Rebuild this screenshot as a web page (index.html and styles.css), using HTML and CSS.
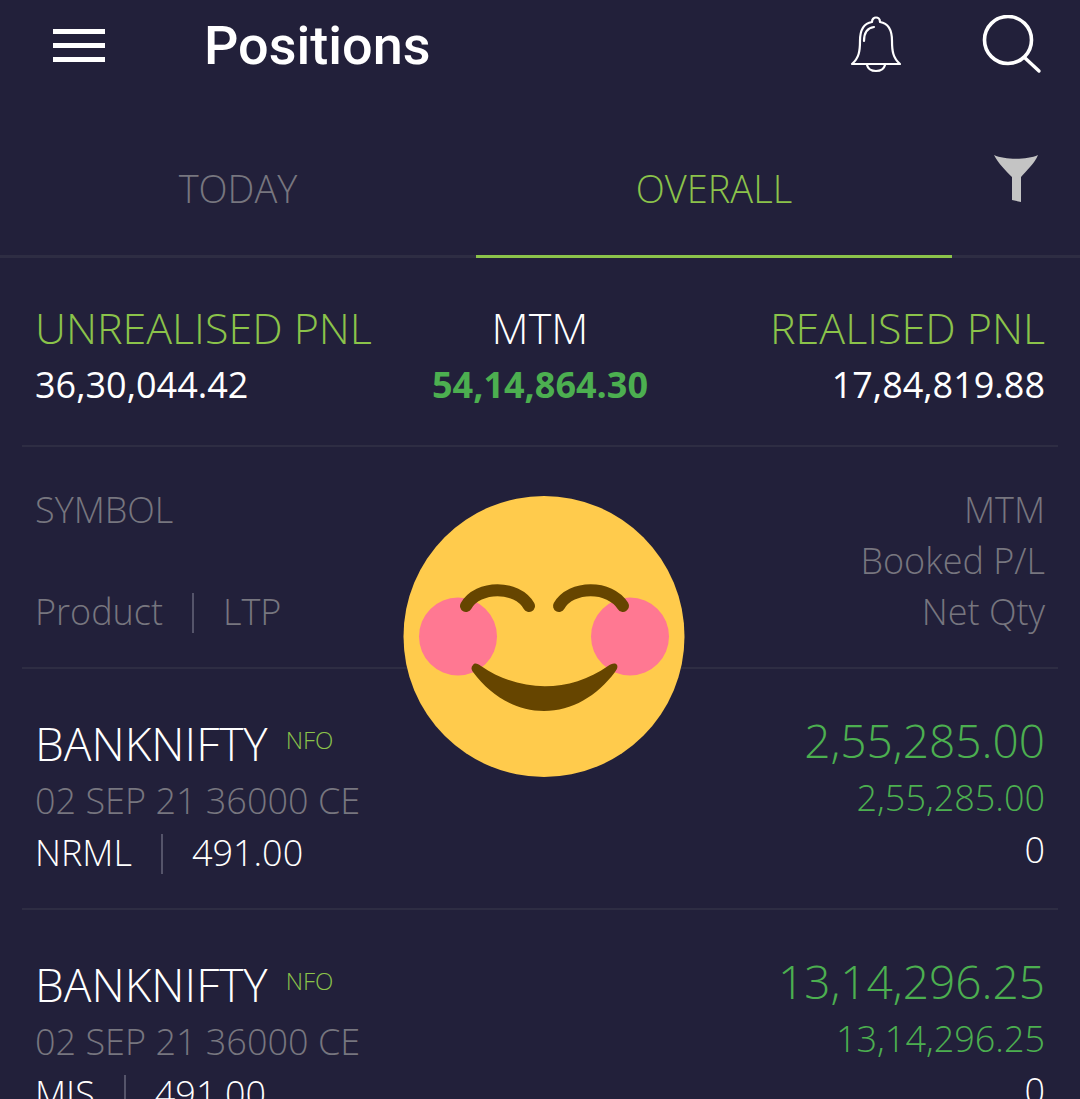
FILE: index.html
```html
<!DOCTYPE html>
<html lang="en">
<head>
  <meta charset="UTF-8" />
  <meta name="viewport" content="width=device-width, initial-scale=1.0" />
  <title>Positions</title>
  <link rel="stylesheet" href="styles.css">
</head>
<body>
  <header class="topbar">
    <div class="menu-icon"><span></span><span></span><span></span></div>
    <h1>Positions</h1>
    <svg class="bell" viewBox="0 0 52 60" fill="none" stroke="#fff" stroke-width="2.2" stroke-linejoin="round" stroke-linecap="round">
      <path d="M2 49 C9 43 10 36 10 26 C10 14 15 8 22 7 C22 1 30 1 30 7 C37 8 42 14 42 26 C42 36 43 43 50 49 Z" />
      <path d="M14 26 C14 18 17 13 24 12" />
      <path d="M17 50 C19 58 33 58 35 50" />
    </svg>
    <svg class="search" viewBox="0 0 60 60" fill="none" stroke="#fff" stroke-linecap="round">
      <circle cx="26" cy="25" r="23.5" stroke-width="3.6" />
      <path d="M43 43 L57 56" stroke-width="3.4" />
    </svg>
  </header>

  <nav class="tabs">
    <div class="tab">TODAY</div>
    <div class="tab tab-active">OVERALL</div>
    <svg class="filter" viewBox="0 0 46 48">
      <path d="M1 1 C12 6 34 6 45 1 C42 9 33 17 28 23 V48 L19 46 V23 C13 17 5 9 1 1 Z" fill="#c4c4c4" />
    </svg>
  </nav>

  <section class="summary">
    <div class="sum-col">
      <div class="sum-label green">UNREALISED PNL</div>
      <div class="sum-value">36,30,044.42</div>
    </div>
    <div class="sum-col sum-mid">
      <div class="sum-label">MTM</div>
      <div class="sum-value sum-total">54,14,864.30</div>
    </div>
    <div class="sum-col sum-right">
      <div class="sum-label green">REALISED PNL</div>
      <div class="sum-value">17,84,819.88</div>
    </div>
  </section>

  <section class="table-head">
    <div>
      <div class="head-line">SYMBOL</div>
      <div class="head-line">&nbsp;</div>
      <div class="head-line">Product<i class="sep"></i>LTP</div>
    </div>
    <div class="align-right">
      <div class="head-line">MTM</div>
      <div class="head-line">Booked P/L</div>
      <div class="head-line">Net Qty</div>
    </div>
  </section>

  <article class="pos-row">
    <div>
      <div class="pos-name">BANKNIFTY<span class="badge">NFO</span></div>
      <div class="pos-contract">02 SEP 21 36000 CE</div>
      <div class="pos-meta">NRML<i class="sep"></i>491.00</div>
    </div>
    <div class="align-right">
      <div class="pos-mtm">2,55,285.00</div>
      <div class="pos-booked">2,55,285.00</div>
      <div class="pos-meta">0</div>
    </div>
  </article>

  <article class="pos-row">
    <div>
      <div class="pos-name">BANKNIFTY<span class="badge">NFO</span></div>
      <div class="pos-contract">02 SEP 21 36000 CE</div>
      <div class="pos-meta">MIS<i class="sep"></i>491.00</div>
    </div>
    <div class="align-right">
      <div class="pos-mtm">13,14,296.25</div>
      <div class="pos-booked">13,14,296.25</div>
      <div class="pos-meta">0</div>
    </div>
  </article>

  <svg class="emoji" viewBox="403 496 282 282">
    <circle cx="544" cy="636.5" r="140.5" fill="#ffcb4c" />
    <circle cx="458" cy="636.5" r="39" fill="#ff7892" />
    <circle cx="630" cy="636.5" r="39" fill="#ff7892" />
    <path d="M466 606 C478 585 517 585 529 606" fill="none" stroke="#664500" stroke-width="12" stroke-linecap="round" />
    <path d="M559 606 C571 585 610 585 623 606" fill="none" stroke="#664500" stroke-width="12" stroke-linecap="round" />
    <path d="M473 665 C475 662 478 664 481 666 C520 693 570 693 608 666 C611 664 615 662 617 665 C618 667 617 669 615 672 C597 696 572 711 544 711 C516 711 491 696 473 672 C471 669 471 667 473 665 Z" fill="#664500" />
  </svg>
</body>
</html>
```

FILE: styles.css
```css
html, body { margin: 0; height: 1099px; overflow: hidden; }
body { position: relative; background: #22203a; color: #fff; font-family: "Open Sans", sans-serif; font-weight: 300; }

.topbar { display: flex; align-items: center; height: 90px; padding-left: 53px; }
.menu-icon { display: flex; flex-direction: column; gap: 9px; width: 52px; }
.menu-icon span { height: 5px; background: #fff; }
.topbar h1 { margin: 0 0 0 99px; font: 500 54px Roboto, sans-serif; flex: 1; }
.bell { width: 52px; height: 60px; margin-right: 80px; }
.search { width: 60px; height: 60px; margin-right: 38px; }

.tabs { position: relative; display: flex; height: 165px; padding-left: 0; border-bottom: 3px solid #2e2d43; }
.tab { width: 476px; height: 168px; box-sizing: border-box; padding-top: 72px; text-align: center; font-size: 38px; color: #77767f; }
.tab-active { color: #8bc34a; border-bottom: 3px solid #8bc34a; }
.filter { position: absolute; left: 993px; top: 64px; width: 46px; height: 48px; }

.summary { display: grid; grid-template-columns: 1fr auto 1fr; margin: 0 22px; padding: 42px 13px 30px; height: 115px; border-bottom: 2px solid #2e2d43; }
.sum-label { font-size: 43px; line-height: 56px; }
.sum-value { font-size: 36px; line-height: 58px; font-weight: 400; }
.sum-mid { text-align: center; }
.sum-right { text-align: right; }
.sum-total { color: #4caf50; font-weight: 700; }
.green { color: #8bc34a; }

.table-head, .pos-row { display: flex; justify-content: space-between; margin: 0 22px; padding: 0 13px; border-bottom: 2px solid #2e2d43; }
.table-head { padding-top: 37px; padding-bottom: 30px; }
.head-line { font-size: 36px; line-height: 51px; color: #77767f; }
.sep { display: inline-block; width: 2px; height: 40px; margin: 0 29px; background: #55546a; vertical-align: -8px; }
.align-right { text-align: right; }

.pos-row { padding-top: 40px; padding-bottom: 30px; }
.pos-name { font-size: 46px; line-height: 62px; }
.badge { margin-left: 18px; font-size: 24px; color: #8bc34a; vertical-align: 12px; }
.pos-contract { font-size: 36px; line-height: 54px; color: #77767f; }
.pos-meta { font-size: 36px; line-height: 50px; }
.pos-mtm { font-size: 46px; line-height: 62px; color: #4caf50; }
.pos-booked { font-size: 36px; line-height: 54px; color: #4caf50; }

.emoji { position: absolute; left: 403px; top: 496px; width: 282px; height: 282px; }
```
